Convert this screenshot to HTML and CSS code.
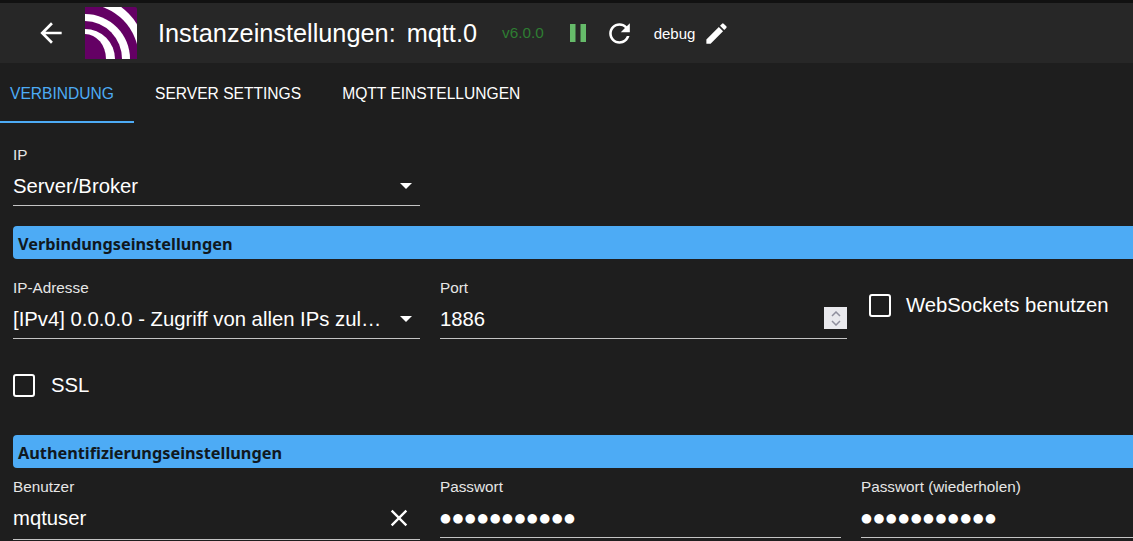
FILE: index.html
```html
<!DOCTYPE html>
<html lang="de">

<head>
    <meta charset="UTF-8">
    <title>Instanzeinstellungen: mqtt.0</title>
    <link rel="stylesheet" href="styles.css">
</head>

<body>

    <!-- Header -->
    <header class="topbar">
        <svg class="back-icon" viewBox="0 0 24 24"><path d="M20 11H7.83l5.59-5.59L12 4l-8 8 8 8 1.41-1.41L7.83 13H20v-2z"/></svg>
        <svg class="logo" viewBox="0 0 52 52">
            <rect width="52" height="52" rx="2" fill="#640064"/>
            <ellipse cx="0" cy="52" rx="62" ry="64" fill="#fff"/>
            <ellipse cx="0" cy="52" rx="54" ry="55" fill="#640064"/>
            <ellipse cx="0" cy="52" rx="45" ry="45" fill="#fff"/>
            <ellipse cx="0" cy="52" rx="37" ry="38" fill="#640064"/>
            <ellipse cx="0" cy="52" rx="30" ry="30" fill="#fff"/>
            <ellipse cx="0" cy="52" rx="21" ry="25" fill="#640064"/>
        </svg>
        <h1 class="title">Instanzeinstellungen:<span class="title-name">mqtt.0</span></h1>
        <span class="version">v6.0.0</span>
        <svg class="pause-icon" viewBox="0 0 16 18"><path d="M0 0h5.500v18H0zM10.500 0H16v18h-5.500z"/></svg>
        <svg class="reload-icon" viewBox="0 0 24 24"><path d="M17.650 6.350C16.200 4.900 14.210 4 12 4c-4.420 0-7.990 3.580-7.990 8s3.570 8 7.990 8c3.730 0 6.840-2.550 7.730-6h-2.080c-.82 2.330-3.040 4-5.650 4-3.310 0-6-2.690-6-6s2.690-6 6-6c1.660 0 3.140.69 4.220 1.780L13 11h7V4l-2.350 2.350z"/></svg>
        <span class="loglevel">debug</span>
        <svg class="edit-icon" viewBox="0 0 24 24"><path d="M3 17.250V21h3.750L17.810 9.940l-3.750-3.750L3 17.250zM20.710 7.040a.996.996 0 0 0 0-1.410l-2.340-2.340a.996.996 0 0 0-1.410 0l-1.830 1.830 3.750 3.750 1.830-1.830z"/></svg>
    </header>

    <!-- Tabs -->
    <nav class="tabs">
        <a class="tab tab-active">Verbindung</a>
        <a class="tab">Server Settings</a>
        <a class="tab">MQTT Einstellungen</a>
    </nav>

    <main class="content">
        <div class="row">
            <div class="field field-wide">
                <label>IP</label>
                <div class="input">
                    <span class="value">Server/Broker</span>
                    <span class="arrow"></span>
                </div>
            </div>
        </div>

        <h2 class="section">Verbindungseinstellungen</h2>

        <div class="row row-connection">
            <div class="field field-wide">
                <label>IP-Adresse</label>
                <div class="input">
                    <span class="value">[IPv4] 0.0.0.0 - Zugriff von allen IPs zul…</span>
                    <span class="arrow"></span>
                </div>
            </div>
            <div class="field field-wide">
                <label>Port</label>
                <div class="input">
                    <span class="value">1886</span>
                    <span class="spinner">
                        <svg viewBox="0 0 10 6"><path d="M1 5l4-4 4 4"/></svg>
                        <svg viewBox="0 0 10 6"><path d="M1 1l4 4 4-4"/></svg>
                    </span>
                </div>
            </div>
            <div class="check check-websockets">
                <span class="box"></span>
                <span>WebSockets benutzen</span>
            </div>
        </div>

        <div class="check check-ssl">
            <span class="box"></span>
            <span>SSL</span>
        </div>

        <h2 class="section">Authentifizierungseinstellungen</h2>

        <div class="row row-auth">
            <div class="field field-wide">
                <label>Benutzer</label>
                <div class="input">
                    <span class="value">mqtuser</span>
                    <svg class="clear-icon" viewBox="0 0 24 24"><path d="M19 6.410L17.590 5 12 10.590 6.410 5 5 6.410 10.590 12 5 17.590 6.410 19 12 13.410 17.590 19 19 17.590 13.410 12z"/></svg>
                </div>
            </div>
            <div class="field field-pass">
                <label>Passwort</label>
                <div class="input">
                    <span class="value value-dots">●●●●●●●●●●●</span>
                </div>
            </div>
            <div class="field field-last">
                <label>Passwort (wiederholen)</label>
                <div class="input">
                    <span class="value value-dots">●●●●●●●●●●●</span>
                </div>
            </div>
        </div>
    </main>

</body>

</html>
```

FILE: styles.css
```css
/* Basic Reset */
html,
body,
h1,
h2 {
    margin: 0;
    padding: 0;
}

html,
body {
    height: 541px;
    overflow: hidden;
}

body {
    background-color: #1e1e1e;
    color: #fff;
    font-family: 'Liberation Sans', Arial, sans-serif;
}

.topbar {
    display: flex;
    align-items: center;
    height: 60px;
    margin-top: 3px;
    background-color: #272727;
    box-shadow: 0 -3px 0 #111;
}

.back-icon {
    width: 32px;
    height: 32px;
    margin-left: 35px;
    fill: #fff;
}

.logo {
    width: 52px;
    height: 52px;
    margin-left: 18px;
}

.title {
    margin-left: 21px;
    font-size: 25.300px;
    font-weight: 400;
}

.title-name {
    margin-left: 11px;
}

.version {
    margin-left: 25px;
    font-size: 15.300px;
    color: #2e7d32;
}

.pause-icon {
    width: 16px;
    height: 18px;
    margin-left: 26px;
    fill: #66bb6a;
}

.reload-icon {
    width: 31px;
    height: 31px;
    margin-left: 18px;
    fill: #fff;
}

.loglevel {
    margin-left: 19px;
    font-size: 15px;
}

.edit-icon {
    width: 27px;
    height: 27px;
    margin-left: 8px;
    fill: #fff;
}

.tabs {
    display: flex;
    height: 60px;
}

.tab {
    display: flex;
    align-items: center;
    box-sizing: border-box;
    height: 60px;
    padding: 2px 10px 0 10px;
    margin-right: 21px;
    font-size: 15.600px;
    text-transform: uppercase;
    color: #fff;
}

.tab-active {
    width: 134px;
    margin-right: 11px;
    padding-top: 3px;
    color: #4dabf5;
    border-bottom: 2px solid #4dabf5;
}

.content {
    padding: 22px 0 0 13px;
}

.row {
    display: flex;
    gap: 20px;
}

.field label {
    display: block;
    font-size: 15.300px;
    line-height: 20px;
    color: #e6e6e6;
}

.field-wide {
    width: 407px;
    flex: none;
}

.field-pass {
    width: 401px;
    flex: none;
}

.field-last {
    flex: 1;
    min-width: 0;
}

.input {
    display: flex;
    align-items: center;
    justify-content: space-between;
    height: 38px;
    padding-top: 2px;
    border-bottom: 1px solid #c4c4c4;
}

.value {
    font-size: 20.300px;
    white-space: nowrap;
}

.value-dots {
    margin-bottom: 2px;
    letter-spacing: 1.500px;
    font-size: 12.500px;
    font-family: 'DejaVu Sans', sans-serif;
}

.arrow {
    width: 0;
    height: 0;
    margin-right: 8px;
    border-left: 6.500px solid transparent;
    border-right: 6.500px solid transparent;
    border-top: 6.500px solid #fff;
}

.spinner {
    display: flex;
    flex-direction: column;
    align-items: center;
    justify-content: center;
    gap: 3px;
    width: 23px;
    height: 22px;
    margin-top: -2px;
    background-color: #e9e9ed;
}

.spinner svg {
    width: 10px;
    height: 6px;
    fill: none;
    stroke: #8f8f9d;
    stroke-width: 1.500;
}

.clear-icon {
    width: 28px;
    height: 28px;
    margin-right: 7px;
    fill: #fff;
}

.section {
    height: 33px;
    margin-top: 20px;
    padding-left: 5px;
    border-radius: 4px 0 0 4px;
    background-color: #4dabf5;
    color: #101820;
    font-family: 'Noto Sans', sans-serif;
    font-size: 16.300px;
    font-weight: 700;
    line-height: 36px;
}

.row-connection {
    margin-top: 19px;
}

.row-auth {
    margin-top: 9px;
}

.row-auth .field-wide .input {
    height: 42px;
    padding-top: 0;
}

.check {
    display: flex;
    align-items: center;
    gap: 15px;
    font-size: 20.300px;
}

.check-ssl {
    gap: 16px;
    margin-top: 35px;
    margin-bottom: 38px;
}

.check-websockets {
    align-self: flex-start;
    margin: 16px 0 0 2px;
}

.box {
    box-sizing: border-box;
    width: 22px;
    height: 23px;
    border: 2.500px solid #fff;
    border-radius: 3px;
}
```
